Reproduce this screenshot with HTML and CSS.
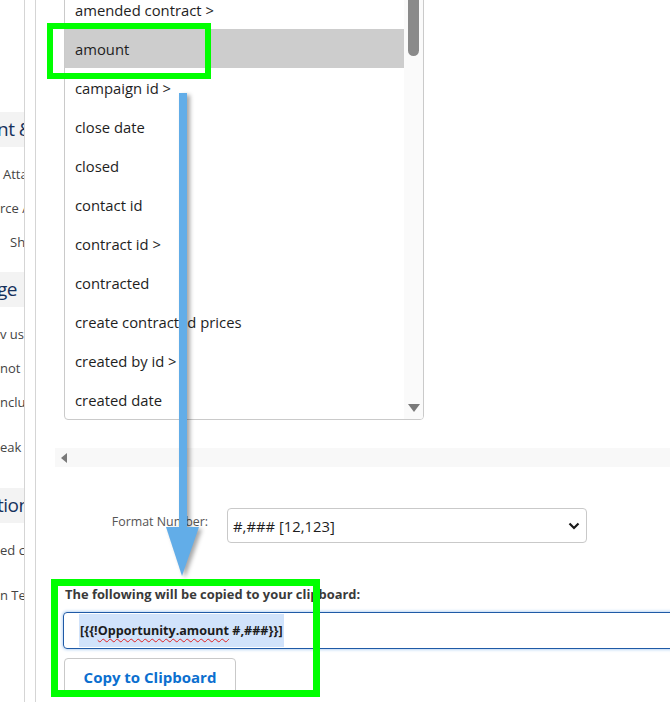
FILE: index.html
```html
<!DOCTYPE html>
<html lang="en">

<head>
    <meta charset="UTF-8">
    <meta name="viewport" content="width=device-width, initial-scale=1.0">
    <title>Merge Field Picker</title>
    <link rel="stylesheet" href="styles.css">
</head>

<body>
    <div class="page">
        <aside class="sidebar">
            <div class="side-head first">nt &amp; Mapping</div>
            <div class="side-item indent-sm">Attachments</div>
            <div class="side-item">rce Aware</div>
            <div class="side-item indent-lg">Show</div>
            <div class="side-head second">ge</div>
            <div class="side-item">v users</div>
            <div class="side-item">not allowed</div>
            <div class="side-item">nclude</div>
            <div class="side-item spaced">eak</div>
            <div class="side-head third">tions</div>
            <div class="side-item">ed comments</div>
            <div class="side-item spaced">n Text</div>
        </aside>
        <div class="divider"></div>

        <main class="content">
            <div class="listbox">
                <div class="rows">
                    <div class="row">amended contract &gt;</div>
                    <div class="row selected">amount</div>
                    <div class="row">campaign id &gt;</div>
                    <div class="row">close date</div>
                    <div class="row">closed</div>
                    <div class="row">contact id</div>
                    <div class="row">contract id &gt;</div>
                    <div class="row">contracted</div>
                    <div class="row">create contracted prices</div>
                    <div class="row">created by id &gt;</div>
                    <div class="row">created date</div>
                </div>
                <div class="vscroll">
                    <div class="thumb"></div>
                    <div class="arrow-down"></div>
                </div>
            </div>

            <div class="hscroll">
                <div class="arrow-left"></div>
            </div>

            <div class="format-row">
                <label class="format-label">Format Number:</label>
                <div class="select">
                    <span>#,### [12,123]</span>
                    <svg class="chevron" width="12" height="8" viewBox="0 0 12 8">
                        <polyline points="1.5,1.5 6,6 10.5,1.5" fill="none" stroke="#1a1a1a" stroke-width="2.2" />
                    </svg>
                </div>
            </div>

            <div class="copy-block">
                <div class="copy-label">The following will be copied to your clipboard:</div>
                <div class="copy-input">
                    <span class="selection">[{{!<span class="misspelled">Opportunity.amount</span> #,###}}]</span>
                </div>
                <button class="copy-btn">Copy to Clipboard</button>
            </div>
        </main>
    </div>

    <!-- annotations drawn over the screenshot -->
    <svg class="annotation-arrow" width="670" height="702" viewBox="0 0 670 702">
        <g class="arrow-shape">
            <rect x="179" y="93" width="8" height="436" fill="#62ade8" />
            <polygon points="166,527 199,527 182,576" fill="#62ade8" />
        </g>
    </svg>
    <div class="mark mark-amount"></div>
    <div class="mark mark-copy"></div>
</body>

</html>
```

FILE: styles.css
```css
* {
    margin: 0;
    padding: 0;
    box-sizing: border-box;
}

body {
    width: 670px;
    height: 702px;
    overflow: hidden;
    background: #ffffff;
    font-family: 'Open Sans', 'Noto Sans', sans-serif;
    color: #1f1f1f;
    position: relative;
}

.page {
    display: flex;
    height: 702px;
}

/* left settings column, clipped by the crop */
.sidebar {
    width: 25px;
    flex-shrink: 0;
    border-right: 1px solid #d5d5d5;
    overflow: hidden;
    white-space: nowrap;
    padding-top: 112px;
}

.side-head {
    height: 35px;
    line-height: 35px;
    background: #f3f3f3;
    color: #16325c;
    font-size: 19px;
    text-indent: -3px;
    letter-spacing: -0.5px;
}

.side-head.second {
    margin-top: 13px;
}

.side-head.third {
    margin-top: 24px;
}

.side-item {
    height: 34px;
    line-height: 34px;
    font-size: 13px;
    color: #444444;
}

.side-head + .side-item {
    margin-top: 10px;
}

.side-item.spaced {
    margin-top: 11px;
}

.side-item.indent-sm {
    padding-left: 3px;
}

.side-item.indent-lg {
    padding-left: 10px;
}

.divider {
    width: 11px;
    flex-shrink: 0;
    border-right: 1px solid #d5d5d5;
}

.content {
    flex: 1;
    padding-left: 19px;
    min-width: 0;
}

/* field list */
.listbox {
    display: flex;
    width: 360px;
    height: 432px;
    margin-top: -12px;
    margin-left: 9px;
    border: 1px solid #cacaca;
    border-radius: 0 0 4px 4px;
    padding-top: 1px;
    overflow: hidden;
}

.rows {
    flex: 1;
}

.row {
    height: 39px;
    line-height: 40px;
    padding-left: 10px;
    font-size: 14.8px;
    color: #1e1e1e;
    white-space: nowrap;
}

.row.selected {
    background: #cdcdcd;
}

.vscroll {
    width: 19px;
    background: #fafafa;
    display: flex;
    flex-direction: column;
    justify-content: space-between;
    align-items: center;
    margin-top: -1px;
}

.thumb {
    width: 11px;
    height: 67px;
    background: #8a8a8a;
    border-radius: 0 0 6px 6px;
}

.arrow-down {
    width: 0;
    height: 0;
    border-left: 6px solid transparent;
    border-right: 6px solid transparent;
    border-top: 8px solid #7a7a7a;
    margin-bottom: 7px;
}

.hscroll {
    height: 19px;
    margin-top: 28px;
    background: #f8f8f8;
    display: flex;
    align-items: center;
    padding-left: 6px;
}

.arrow-left {
    width: 0;
    height: 0;
    border-top: 5px solid transparent;
    border-bottom: 5px solid transparent;
    border-right: 6px solid #7a7a7a;
}

/* format options */
.format-row {
    display: flex;
    align-items: center;
    margin-top: 41px;
}

.format-label {
    width: 164px;
    text-align: right;
    padding-right: 11px;
    margin-right: 8px;
    font-size: 12.4px;
    color: #555555;
    margin-top: -8px;
}

.select {
    width: 360px;
    height: 35px;
    border: 1px solid #c9c9c9;
    border-radius: 4px;
    display: flex;
    align-items: center;
    justify-content: space-between;
    padding: 0 6px 0 5px;
    font-size: 14.8px;
    color: #1e1e1e;
}

.chevron {
    margin-top: 1px;
}

/* clipboard preview */
.copy-block {
    padding-top: 42px;
}

.copy-label {
    margin-left: 10px;
    font-size: 12.9px;
    font-weight: 700;
    line-height: 18px;
    color: #3a3a3a;
}

.copy-input {
    width: 640px;
    height: 37px;
    margin-top: 9px;
    margin-left: 8px;
    border: 1px solid #1f5aa6;
    border-radius: 4px 0 0 4px;
    box-shadow: 0 0 3px 1px #bcd6f4;
    padding: 1px 0 0 15px;
}

.selection {
    display: inline-block;
    height: 33px;
    line-height: 33px;
    padding: 0 1px 0 1px;
    background: #d1e3fb;
    font-size: 12.6px;
    font-weight: 700;
    color: #1c1c1c;
}

.misspelled {
    text-decoration: underline wavy #e02020;
    text-decoration-thickness: 1px;
    text-underline-offset: 3px;
}

.copy-btn {
    display: block;
    width: 172px;
    height: 38px;
    margin-top: 9px;
    margin-left: 9px;
    border: 1px solid #c9c9c9;
    border-radius: 4px;
    background: #ffffff;
    font-family: inherit;
    font-size: 15px;
    font-weight: 700;
    color: #0b6fcf;
}

/* callouts drawn on top */
.annotation-arrow {
    position: absolute;
    top: 0;
    left: 0;
    pointer-events: none;
}

.arrow-shape {
    filter: drop-shadow(3px 2px 2px rgba(0, 0, 0, 0.35));
}

.mark {
    position: absolute;
    border: 6px solid #00ff00;
    pointer-events: none;
}

.mark-amount {
    left: 47px;
    top: 23px;
    width: 164px;
    height: 56px;
}

.mark-copy {
    left: 51px;
    top: 579px;
    width: 269px;
    height: 118px;
    border-width: 7px;
}
```
